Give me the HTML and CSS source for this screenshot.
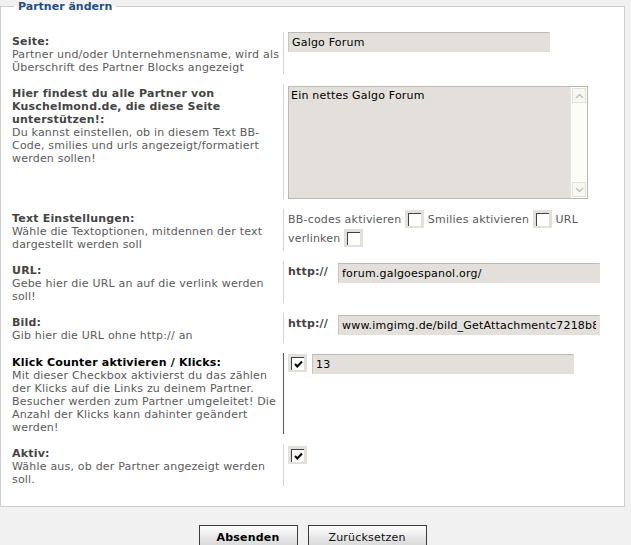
FILE: index.html
```html
<!DOCTYPE html>
<html lang="de">
<head>
    <meta charset="UTF-8">
    <title>Partner ändern</title>
    <link rel="stylesheet" href="styles.css">
</head>
<body>
    <form class="partner-form">
        <fieldset class="box">
            <legend>Partner ändern</legend>

            <div class="row">
                <div class="label"><b>Seite:</b><br>Partner und/oder Unternehmensname, wird als Überschrift des Partner Blocks angezeigt</div>
                <div class="value"><input class="text" type="text" value="Galgo Forum"></div>
            </div>

            <div class="row">
                <div class="label"><b>Hier findest du alle Partner von Kuschelmond.de, die diese Seite unterstützen!:</b><br>Du kannst einstellen, ob in diesem Text BB-Code, smilies und urls angezeigt/formatiert werden sollen!</div>
                <div class="value">
                    <div class="textbox">
                        <textarea>Ein nettes Galgo Forum</textarea>
                        <div class="scroll">
                            <span class="arrow"><svg width="9" height="6" viewBox="0 0 9 6"><path d="M1 5 L4.5 1.5 L8 5" fill="none" stroke="#c2c2bd" stroke-width="1.5"/></svg></span>
                            <span class="arrow"><svg width="9" height="6" viewBox="0 0 9 6"><path d="M1 1 L4.5 4.5 L8 1" fill="none" stroke="#c2c2bd" stroke-width="1.5"/></svg></span>
                        </div>
                    </div>
                </div>
            </div>

            <div class="row">
                <div class="label"><b>Text Einstellungen:</b><br>Wähle die Textoptionen, mitdennen der text dargestellt werden soll</div>
                <div class="value opts">
                    BB-codes aktivieren <span class="cb"><span class="tick"></span></span>
                    Smilies aktivieren <span class="cb"><span class="tick"></span></span>
                    URL verlinken <span class="cb"><span class="tick"></span></span>
                </div>
            </div>

            <div class="row">
                <div class="label"><b>URL:</b><br>Gebe hier die URL an auf die verlink werden soll!</div>
                <div class="value"><span class="proto">http://</span><input class="text" type="text" value="forum.galgoespanol.org/"></div>
            </div>

            <div class="row row-short">
                <div class="label"><b>Bild:</b><br>Gib hier die URL ohne http:// an</div>
                <div class="value"><span class="proto">http://</span><input class="text" type="text" value="www.imgimg.de/bild_GetAttachmentc7218b87"></div>
            </div>

            <div class="row">
                <div class="label"><b class="strong">Klick Counter aktivieren / Klicks:</b><br>Mit dieser Checkbox aktivierst du das zählen der Klicks auf die Links zu deinem Partner. Besucher werden zum Partner umgeleitet! Die Anzahl der Klicks kann dahinter geändert werden!</div>
                <div class="value dark">
                    <span class="cb"><span class="tick"><svg width="11" height="11" viewBox="0 0 11 11"><path d="M2 5 L4.3 7.5 L9 2.5" fill="none" stroke="#000" stroke-width="2"/></svg></span></span><input class="text" type="text" value="13">
                </div>
            </div>

            <div class="row">
                <div class="label"><b>Aktiv:</b><br>Wähle aus, ob der Partner angezeigt werden soll.</div>
                <div class="value">
                    <span class="cb"><span class="tick"><svg width="11" height="11" viewBox="0 0 11 11"><path d="M2 5 L4.3 7.5 L9 2.5" fill="none" stroke="#000" stroke-width="2"/></svg></span></span>
                </div>
            </div>
        </fieldset>

        <div class="buttons">
            <button type="submit" class="btn btn-main">Absenden</button>
            <button type="reset" class="btn">Zurücksetzen</button>
        </div>
    </form>
</body>
</html>
```

FILE: styles.css
```css
* {box-sizing: border-box;}
body {margin: 0; background: #f1f1f1; font: 11px/13px "DejaVu Sans", Verdana, sans-serif; letter-spacing: 0.2px; color: #5a5a5a;}

.box {margin: 0 6px 0 0; padding: 19px 0 20px; border: 1px solid #cdcdcd; background: #fff; min-width: 0;}
.box legend {margin-left: 13px; padding: 0 4px; color: #234f80; font-weight: bold; line-height: 13px; letter-spacing: 0;}

.row {display: grid; grid-template-columns: 282px 1fr; min-height: 42px; margin-bottom: 10px;}
.row:last-child {margin-bottom: 0;}
.row .label {padding: 3px 0 0 11px;}
.row .label b {color: #444;}
.row .label b.strong {color: #000;}
.row .value {border-left: 1px solid #d2d2d2; padding-left: 4px;}
.row .value.dark {border-left-color: #555;}
.row-short {min-height: 30px;}

.text {
    width: 262px; height: 20px; margin: 0; padding: 0 3px; vertical-align: top;
    font: 11px "DejaVu Sans", Verdana, sans-serif; letter-spacing: 0.2px; color: #000;
    background: #e3e0db; border: 1px solid #e3e0db; border-top-color: #bdbab4; border-left-color: #c8c5bf;
}
.proto {display: inline-block; font-weight: bold; color: #444; width: 50px; line-height: 22px; vertical-align: top;}
.proto + .text {margin-top: 2px;}

.textbox {display: flex; width: 300px; height: 113px; margin-top: 2px; border: 1px solid #bbb8b2; background: #e3e0db;}
.textbox textarea {
    flex: 1; border: 0; background: transparent; resize: none; overflow: hidden; padding: 2px 2px;
    font: 11px/13px "DejaVu Sans", Verdana, sans-serif; letter-spacing: 0.2px; color: #000;
}
.scroll {width: 17px; background: #fcfcf8; border-left: 1px solid #e6e4de; display: flex; flex-direction: column; justify-content: space-between; padding: 1px;}
.scroll .arrow {display: flex; align-items: center; justify-content: center; height: 15px; border: 1px solid #e2e0da; background: #f7f7f3;}

.opts {padding-top: 1px; line-height: 19px;}
.cb {display: inline-block; width: 19px; height: 18px; padding: 3px 3px 2px 3px; background: #e3e0db; vertical-align: middle; margin-top: -3px;}
.cb .tick {display: flex; align-items: center; justify-content: center; width: 13px; height: 13px; background: #fff; border-top: 1px solid #404040; border-left: 1px solid #404040;}
.dark .cb {margin: 1px 5px 0 0; vertical-align: top;}
.dark .text {margin-top: 1px;}
.row:last-child .cb {margin-top: 2px;}

.buttons {display: flex; justify-content: center; gap: 10px; margin: 18px 6px 0 0;}
.btn {
    height: 24px; padding: 0; border: 1px solid #3c3c3c; background: linear-gradient(#ffffff, #e4e4e4 60%, #d6d6d6);
    font: 11px "DejaVu Sans", Verdana, sans-serif; letter-spacing: 0.2px; color: #111;
}
.btn-main {width: 99px; font-weight: bold; color: #000;}
.btn + .btn {width: 119px;}
```
